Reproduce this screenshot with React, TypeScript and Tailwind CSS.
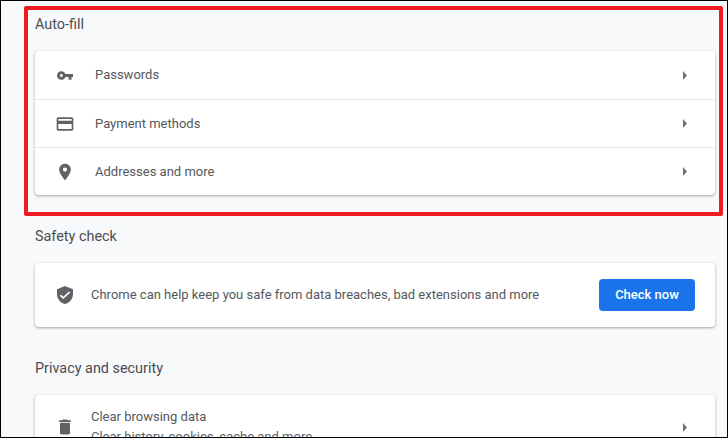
import type { ReactNode } from "react";

const KeyIcon = () => (
  <svg viewBox="1 6 22 12" className="w-4 h-[9px] fill-[#5f6368]">
    <path d="M12.65 10C11.83 7.67 9.61 6 7 6c-3.31 0-6 2.69-6 6s2.69 6 6 6c2.61 0 4.83-1.67 5.65-4H17v4h4v-4h2v-4H12.65zM7 14c-1.1 0-2-.9-2-2s.9-2 2-2 2 .9 2 2-.9 2-2 2z" />
  </svg>
);

const CardIcon = () => (
  <svg viewBox="0 0 24 24" className="w-5 h-5 fill-[#5f6368]">
    <path d="M20 4H4c-1.11 0-1.99.89-1.99 2L2 18c0 1.11.89 2 2 2h16c1.11 0 2-.89 2-2V6c0-1.11-.89-2-2-2zm0 14H4v-6h16v6zm0-10H4V6h16v2z" />
  </svg>
);

const PinIcon = () => (
  <svg viewBox="0 0 24 24" className="w-5 h-5 fill-[#5f6368]">
    <path d="M12 2C8.13 2 5 5.13 5 9c0 5.25 7 13 7 13s7-7.75 7-13c0-3.87-3.13-7-7-7zm0 9.5c-1.38 0-2.5-1.12-2.5-2.5s1.12-2.5 2.5-2.5 2.5 1.12 2.5 2.5-1.12 2.5-2.5 2.5z" />
  </svg>
);

const ShieldIcon = () => (
  <svg viewBox="3 1 18 22" className="w-4 h-[18px] fill-[#5f6368]" preserveAspectRatio="none">
    <path d="M12 1 3 5v6c0 5.55 3.84 10.74 9 12 5.16-1.26 9-6.45 9-12V5l-9-4zm-2 16-4-4 1.41-1.41L10 14.17l6.59-6.59L18 9l-8 8z" />
  </svg>
);

const TrashIcon = () => (
  <svg viewBox="0 0 24 24" className="w-5 h-5 fill-[#5f6368]">
    <path d="M6 19c0 1.1.9 2 2 2h8c1.1 0 2-.9 2-2V7H6v12zM19 4h-3.5l-1-1h-5l-1 1H5v2h14V4z" />
  </svg>
);

const Arrow = () => (
  <svg viewBox="0 0 4 9" className="w-1 h-[9px] fill-[#707377] shrink-0">
    <path d="M0 0l4 4.5-4 4.5z" />
  </svg>
);

const Title = ({ children }: { children: ReactNode }) => (
  <h2 className="text-[14.4px] leading-5 text-[#4a4d51]">{children}</h2>
);

const IconBox = ({ children }: { children: ReactNode }) => (
  <span className="w-6 h-6 shrink-0 flex items-center justify-center">{children}</span>
);

const Row = ({ icon, label, className }: { icon: ReactNode; label: string; className: string }) => (
  <div className={`flex items-center pl-[18px] pr-[28px] ${className}`}>
    <IconBox>{icon}</IconBox>
    <span className="ml-[18px] flex-1 text-[13px] text-[#55585c]">{label}</span>
    <Arrow />
  </div>
);

const cardCls =
  "bg-white rounded-[4px] shadow-[0_1px_2px_rgba(60,64,67,0.3),0_1px_3px_1px_rgba(60,64,67,0.12)]";

export default function App() {
  return (
    <div
      className="relative w-[728px] h-[438px] overflow-hidden bg-[#f8f9fa] border border-black"
      style={{ fontFamily: "Roboto, sans-serif" }}
    >
      <div className="pl-[34px] pr-[12px] pt-[14px]">
        <Title>Auto-fill</Title>
        <div className={`mt-4 ${cardCls}`}>
          <Row className="h-[49px] border-b border-[#e8eaed]" icon={<KeyIcon />} label="Passwords" />
          <Row className="h-12 border-b border-[#e8eaed]" icon={<CardIcon />} label="Payment methods" />
          <Row className="h-[47px]" icon={<PinIcon />} label="Addresses and more" />
        </div>

        <div className="mt-8">
          <Title>Safety check</Title>
        </div>
        <div className={`mt-4 h-16 flex items-center pl-[18px] pr-[20px] ${cardCls}`}>
          <IconBox>
            <ShieldIcon />
          </IconBox>
          <span className="ml-[14px] flex-1 text-[13px] text-[#55585c]">
            Chrome can help keep you safe from data breaches, bad extensions and more
          </span>
          <button className="w-24 h-8 rounded-[4px] bg-[#1a73e8] text-white text-[13px] font-medium">
            Check now
          </button>
        </div>

        <div className="mt-8">
          <Title>Privacy and security</Title>
        </div>
        <div className={`mt-4 h-16 flex items-center pl-[18px] pr-[28px] ${cardCls}`}>
          <IconBox>
            <TrashIcon />
          </IconBox>
          <div className="ml-[14px] flex-1 text-[13px] leading-5">
            <div className="text-[#55585c]">Clear browsing data</div>
            <div className="text-[#5f6368]">Clear history, cookies, cache and more</div>
          </div>
          <Arrow />
        </div>
      </div>

      {/* red highlight drawn over the screenshot */}
      <div className="absolute left-[23px] top-[5px] w-[699px] h-[210px] rounded-[2px] border-4 border-[#ed1c24]" />
    </div>
  );
}
